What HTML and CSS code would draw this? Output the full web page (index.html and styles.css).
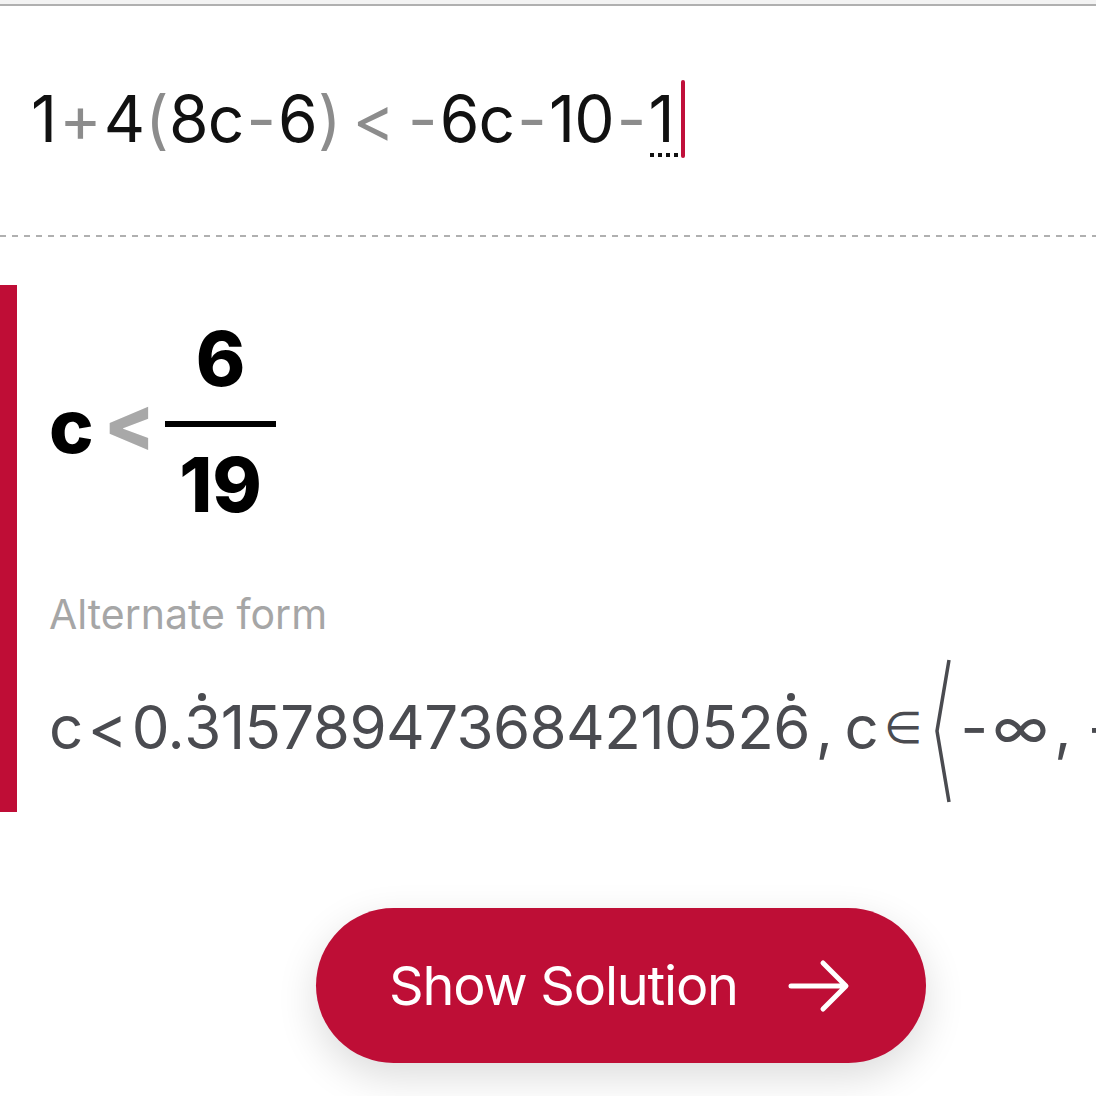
FILE: index.html
```html
<!DOCTYPE html>
<html>
<head>
<meta charset="utf-8">
<link rel="stylesheet" href="styles.css">
</head>
<body>
<div class="topbar"></div>
<div class="input">
  <div class="eq">
    <span>1</span><span class="op">+</span><span>4</span><span class="op paren">(</span><span>8c</span><span class="op">-</span><span>6</span><span class="op paren">)</span><span class="op lt">&lt;</span><span class="op neg">-</span><span>6c</span><span class="op">-</span><span>10</span><span class="op">-</span><span class="last">1<span class="dots"></span></span><span class="cursor"></span>
  </div>
</div>
<div class="dashed"></div>
<section class="result">
  <div class="main">
    <span class="var">c</span>
    <span class="rel">&lt;</span>
    <span class="frac"><span class="num">6</span><span class="bar"></span><span class="den">19</span></span>
  </div>
  <div class="label">Alternate form</div>
  <div class="alt">
    <span>c</span><span class="sp">&lt;</span><span>0.</span><span class="rep">3</span><span>1578947368421052</span><span class="rep">6</span><span class="comma">,</span><span>c</span><span class="sp elem">∈</span><span class="angle"><svg width="22" height="146" viewBox="0 0 22 146"><path d="M17 2 L5 73 L17 144" fill="none" stroke="#4a4b50" stroke-width="3.5"/></svg></span><span class="sp">-</span><span>∞</span><span class="comma">,</span><span class="sp">-</span>
  </div>
</section>
<div class="actions">
  <button class="solve">Show Solution
    <svg class="arrow" width="62" height="56" viewBox="0 0 62 56"><path d="M3 28 H57 M35 5 L58 28 L35 51" fill="none" stroke="#fff" stroke-width="5" stroke-linecap="round" stroke-linejoin="round"/></svg>
  </button>
</div>
</body>
</html>
```
FILE: styles.css
```css
html, body {
  margin: 0;
  padding: 0;
  background: #fff;
  overflow: hidden;
}
body {
  width: 1096px;
  height: 1096px;
  font-family: Inter, "Noto Sans", sans-serif;
}
.topbar {
  height: 4px;
  background: #f3f3f3;
  border-bottom: 2px solid #b0b0b0;
}
.input {
  height: 229px;
  padding-left: 31px;
  box-sizing: border-box;
  padding-top: 73px;
}
.eq {
  display: flex;
  align-items: baseline;
  font-size: 64px;
  line-height: 80px;
  color: #111;
  letter-spacing: -0.8px;
}
.eq .op {
  color: #8c8c8c;
  margin: 0 3px;
}
.eq .paren {
  margin: 0 1px;
}
.eq .lt {
  margin: 0 14px 0 11px;
}
.eq .neg {
  margin-left: 0;
}
.eq .last {
  position: relative;
}
.dots {
  position: absolute;
  left: 2px;
  right: -6px;
  bottom: 2px;
  height: 4px;
  background: repeating-linear-gradient(90deg, #111 0 4px, transparent 4px 8px);
}
.cursor {
  width: 4px;
  height: 78px;
  background: #c0103a;
  border-radius: 2px;
  margin-left: 7px;
  align-self: center;
}
.dashed {
  height: 2px;
  background: repeating-linear-gradient(90deg, #b0b0b0 0 6px, transparent 6px 12px);
}
.result {
  margin-top: 48px;
  height: 527px;
  border-left: 17px solid #bf0d36;
  padding-left: 32px;
  box-sizing: border-box;
  overflow: hidden;
}
.main {
  display: flex;
  align-items: center;
  height: 264px;
  padding-top: 10px;
  box-sizing: border-box;
  font-family: Inter, sans-serif;
  font-weight: 800;
  font-size: 75px;
  color: #000;
}
.main .var {
  margin-top: 6px;
}
.main .rel {
  color: #a8a8a8;
  margin: 0 10px 0 10px;
}
.frac {
  display: flex;
  flex-direction: column;
  align-items: center;
}
.frac .num, .frac .den {
  line-height: 80px;
}
.frac .bar {
  width: 111px;
  height: 6px;
  background: #000;
  margin: 22px 0 18px;
}
.label {
  font-size: 41px;
  color: #a6a6a6;
  line-height: 50px;
  margin-top: 40px;
}
.alt {
  display: flex;
  align-items: center;
  white-space: nowrap;
  font-size: 60px;
  color: #4a4b50;
  height: 150px;
  margin-top: 13px;
  letter-spacing: -0.6px;
}
.alt .sp {
  margin: 0 5px;
}
.alt .elem {
  font-size: 44px;
  margin: 0 4px 0 6px;
}
.alt .rep {
  position: relative;
}
.alt .rep::before {
  content: "";
  position: absolute;
  width: 8px;
  height: 8px;
  border-radius: 50%;
  background: #4a4b50;
  left: 50%;
  margin-left: -4px;
  top: 2px;
}
.alt .comma {
  margin: 0 12px 0 6px;
}
.alt .angle {
  display: flex;
  margin: 8px 2px 0 6px;
}
.actions {
  padding-left: 316px;
  margin-top: 96px;
}
.solve {
  width: 610px;
  height: 155px;
  border: none;
  border-radius: 78px;
  background: #be0e36;
  color: #fff;
  font-family: Inter, sans-serif;
  font-size: 54px;
  letter-spacing: -1.2px;
  display: flex;
  align-items: center;
  padding: 0 0 0 73px;
  box-shadow: 0 14px 40px rgba(0,0,0,0.14);
}
.solve .arrow {
  margin-left: 50px;
}
```
